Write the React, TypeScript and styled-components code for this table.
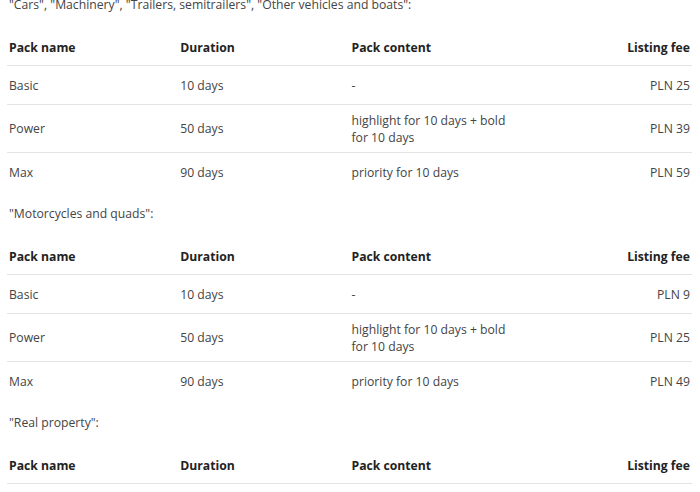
import React from "react";
import styled, { createGlobalStyle } from "styled-components";

const GlobalStyle = createGlobalStyle`
  html, body { margin: 0; padding: 0; background: #ffffff; }
  body { font-family: "Open Sans", "Liberation Sans", Arial, sans-serif; color: #3b3b3b; }
`;

const Page = styled.div`
  margin-top: -17px;
  padding: 0 8px 0 7px;
  font-size: 12.2px;
  line-height: 17px;
`;

const Caption = styled.p`
  margin: 0;
  padding: 13px 2px 14px;
  color: #444;
`;

const Table = styled.div`
  display: flex;
  flex-direction: column;
`;

const Row = styled.div<{ $last?: boolean; $head?: boolean }>`
  display: grid;
  grid-template-columns: repeat(4, 1fr);
  align-items: center;
  box-sizing: border-box;
  min-height: 39px;
  padding-top: ${(p) => (p.$head ? "2px" : "0")};
  border-bottom: 1px solid ${(p) => (p.$last ? "transparent" : "#e4e4e4")};
`;

const Cell = styled.div<{ $right?: boolean; $head?: boolean }>`
  padding: 6.5px 2px;
  text-align: ${(p) => (p.$right ? "right" : "left")};
  font-weight: ${(p) => (p.$head ? 700 : 400)};
  color: ${(p) => (p.$head ? "#222" : "#444")};
`;

type Pack = { name: string; duration: string; content: React.ReactNode; fee: string };

const Content = styled.span`
  display: inline-block;
  max-width: 162px;
`;

const PackTable = ({ rows }: { rows: Pack[] }) => (
  <Table>
    <Row $head>
      <Cell $head>Pack name</Cell>
      <Cell $head>Duration</Cell>
      <Cell $head>Pack content</Cell>
      <Cell $head $right>Listing fee</Cell>
    </Row>
    {rows.map((r, i) => (
      <Row key={r.name} $last={i === rows.length - 1}>
        <Cell>{r.name}</Cell>
        <Cell>{r.duration}</Cell>
        <Cell><Content>{r.content}</Content></Cell>
        <Cell $right>{r.fee}</Cell>
      </Row>
    ))}
  </Table>
);

const cars: Pack[] = [
  { name: "Basic", duration: "10 days", content: "-", fee: "PLN 25" },
  { name: "Power", duration: "50 days", content: "highlight for 10 days + bold for 10 days", fee: "PLN 39" },
  { name: "Max", duration: "90 days", content: "priority for 10 days", fee: "PLN 59" },
];

const moto: Pack[] = [
  { name: "Basic", duration: "10 days", content: "-", fee: "PLN 9" },
  { name: "Power", duration: "50 days", content: "highlight for 10 days + bold for 10 days", fee: "PLN 25" },
  { name: "Max", duration: "90 days", content: "priority for 10 days", fee: "PLN 49" },
];

export default function App() {
  return (
    <>
      <GlobalStyle />
      <Page>
        <Caption>"Cars", "Machinery", "Trailers, semitrailers", "Other vehicles and boats":</Caption>
        <PackTable rows={cars} />
        <Caption>"Motorcycles and quads":</Caption>
        <PackTable rows={moto} />
        <Caption>"Real property":</Caption>
        <PackTable rows={[]} />
      </Page>
    </>
  );
}
